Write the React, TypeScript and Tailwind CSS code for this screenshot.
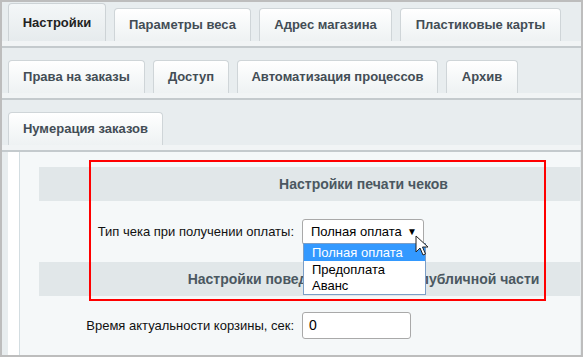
const font = { fontFamily: '"Liberation Sans", Arial, sans-serif' }

function Tab({ label, w, active }: { label: string; w: number; active?: boolean }) {
  return (
    <div
      style={{ width: w }}
      className={
        active
          ? "h-[38px] rounded-t-[4px] border border-b-0 border-[#cdd3d6] bg-gradient-to-b from-[#f4f7f8] to-[#e6ebed] flex items-center justify-center text-[13px] font-bold text-[#222] whitespace-nowrap"
          : "h-[33px] rounded-t-[4px] border border-b-0 border-[#cfd5d8] bg-gradient-to-b from-[#ffffff] to-[#eef2f3] flex items-center justify-center text-[13px] font-bold text-[#434d55] whitespace-nowrap"
      }
    >
      {label}
    </div>
  )
}

function TabRow({ tabs, first }: { tabs: { label: string; w: number; active?: boolean }[]; first?: boolean }) {
  return (
    <div>
      <div className={`flex items-end gap-[8px] px-[6px] ${first ? "pt-[1px]" : "pt-[12px]"}`}>
        {tabs.map((t) => (
          <Tab key={t.label} {...t} />
        ))}
      </div>
      <div className="h-[7px] bg-[#f1f4f5] border-b-2 border-[#c4cacd]" />
    </div>
  )
}

function Band({ text }: { text: string }) {
  return (
    <div className="h-[34px] bg-[#e1e7e9] pl-[108px] flex items-center justify-center text-[14px] font-bold text-[#4b5861] whitespace-nowrap">
      {text}
    </div>
  )
}

export default function App() {
  return (
    <div style={font} className="relative w-[583px] h-[357px] overflow-hidden border-2 border-[#bdbdbd] bg-[#e8edef] flex flex-col">
      <TabRow
        first
        tabs={[
          { label: "Настройки", w: 98, active: true },
          { label: "Параметры веса", w: 137 },
          { label: "Адрес магазина", w: 133 },
          { label: "Пластиковые карты", w: 161 },
        ]}
      />
      <TabRow
        tabs={[
          { label: "Права на заказы", w: 137 },
          { label: "Доступ", w: 76 },
          { label: "Автоматизация процессов", w: 201 },
          { label: "Архив", w: 72 },
        ]}
      />
      <TabRow tabs={[{ label: "Нумерация заказов", w: 155 }]} />

      <div className="flex-1 ml-[6px] mr-[1px] flex">
        <div className="w-[12px] bg-white border-r border-[#d3dde1]" />
        <div className="flex-1 bg-[#f5f8f9] pl-[19px] pt-[15px]">
          <Band text="Настройки печати чеков" />
          <div className="h-[61px] flex items-center">
            <div className="w-[255px] text-right text-[13px] text-[#111] whitespace-nowrap">Тип чека при получении оплаты:</div>
            <div className="ml-[8px] w-[122px] h-[26px] rounded-[3px] border border-[#a9a9a9] bg-white flex items-center justify-between pl-[8px] pr-[6px] text-[13px] text-black whitespace-nowrap">
              <span>Полная оплата</span>
              <span className="text-[10px]">▼</span>
            </div>
          </div>
          <Band text="Настройки поведения корзины в публичной части" />
          <div className="h-[59px] flex items-center">
            <div className="w-[255px] text-right text-[13px] text-[#111] whitespace-nowrap">Время актуальности корзины, сек:</div>
            <div className="ml-[8px] w-[109px] h-[27px] rounded-[3px] border border-[#a9a9a9] bg-white flex items-center pl-[6px] text-[14px] text-black">
              0
            </div>
          </div>
        </div>
      </div>

      {/* highlight frame */}
      <div className="absolute left-[87px] top-[158px] w-[457px] h-[141px] border-2 border-[#ff0000]" />

      {/* open select list */}
      <div className="absolute left-[301px] top-[241px] w-[123px] h-[52px] border border-[#7b9ec7] bg-white text-[13px] text-black leading-[16px] whitespace-nowrap">
        <div className="bg-[#3399ff] text-white pl-[8px] h-[17px] flex items-center">Полная оплата</div>
        <div className="pl-[8px] h-[17px] flex items-center">Предоплата</div>
        <div className="pl-[8px] h-[16px] flex items-center">Аванс</div>
      </div>

      {/* mouse cursor */}
      <svg className="absolute left-[413px] top-[233px]" width="14" height="22" viewBox="0 0 14 22">
        <path d="M1 1 L1 17 L5 13 L8 20 L10.5 19 L7.5 12 L13 12 Z" fill="white" stroke="#222" strokeWidth="1" strokeLinejoin="round" />
      </svg>
    </div>
  )
}
